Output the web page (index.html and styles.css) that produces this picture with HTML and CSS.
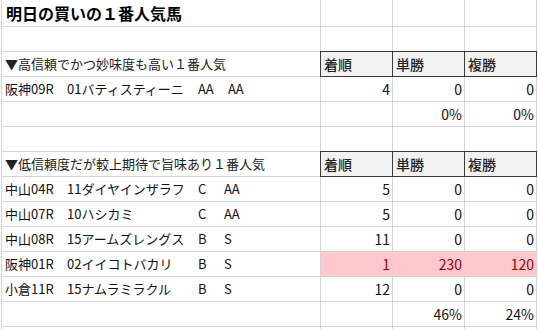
FILE: index.html
```html
<!DOCTYPE html>
<html lang="ja">
<head>
<meta charset="utf-8">
<title>明日の買いの１番人気馬</title>
<link rel="stylesheet" href="styles.css">
</head>
<body>
<div class="sheet">
  <div class="cell title">明日の買いの１番人気馬</div><div class="cell"></div><div class="cell"></div><div class="cell"></div>
  <div class="cell"></div><div class="cell"></div><div class="cell"></div><div class="cell"></div>

  <div class="cell section">▼高信頼でかつ妙味度も高い１番人気</div><div class="cell head">着順</div><div class="cell head">単勝</div><div class="cell head">複勝</div>
  <div class="cell"><div class="entry wide"><span>阪神09R</span><span>01バティスティーニ</span><span>AA</span><span>AA</span></div></div><div class="cell num">4</div><div class="cell num">0</div><div class="cell num">0</div>
  <div class="cell"></div><div class="cell num"></div><div class="cell num">0%</div><div class="cell num">0%</div>
  <div class="cell"></div><div class="cell"></div><div class="cell"></div><div class="cell"></div>

  <div class="cell section">▼低信頼度だが較上期待で旨味あり１番人気</div><div class="cell head">着順</div><div class="cell head">単勝</div><div class="cell head">複勝</div>
  <div class="cell"><div class="entry"><span>中山04R</span><span>11ダイヤインザラフ</span><span>C</span><span>AA</span></div></div><div class="cell num">5</div><div class="cell num">0</div><div class="cell num">0</div>
  <div class="cell"><div class="entry"><span>中山07R</span><span>10ハシカミ</span><span>C</span><span>AA</span></div></div><div class="cell num">5</div><div class="cell num">0</div><div class="cell num">0</div>
  <div class="cell"><div class="entry"><span>中山08R</span><span>15アームズレングス</span><span>B</span><span>S</span></div></div><div class="cell num">11</div><div class="cell num">0</div><div class="cell num">0</div>
  <div class="cell"><div class="entry"><span>阪神01R</span><span>02イイコトバカリ</span><span>B</span><span>S</span></div></div><div class="cell num hit">1</div><div class="cell num hit mid">230</div><div class="cell num hit last">120</div>
  <div class="cell"><div class="entry"><span>小倉11R</span><span>15ナムラミラクル</span><span>B</span><span>S</span></div></div><div class="cell num">12</div><div class="cell num">0</div><div class="cell num">0</div>
  <div class="cell"></div><div class="cell num"></div><div class="cell num">46%</div><div class="cell num">24%</div>
  <div class="cell"></div><div class="cell"></div><div class="cell"></div><div class="cell"></div>
</div>
</body>
</html>
```
FILE: styles.css
```css
html, body {
  margin: 0;
  padding: 0;
  background: #fff;
  overflow: hidden;
}
body {
  font-family: "Noto Sans CJK JP", "Noto Sans", sans-serif;
  color: #111;
}
.sheet {
  margin-left: 1px;
  width: 536px;
  height: 329px;
  overflow: hidden;
  box-sizing: border-box;
  display: grid;
  grid-template-columns: 318px 71px 71px 71px;
  grid-template-rows: 26px repeat(12, 24px) 2px;
  gap: 1px;
  padding: 0 1px;
  background: #d4d4d4;
}
.cell {
  background: #fff;
  display: flex;
  align-items: center;
  font-size: 13px;
  line-height: 24px;
  padding: 0 3px;
  white-space: nowrap;
  overflow: hidden;
}
.title {
  font-size: 16px;
  font-weight: 700;
  color: #000;
  padding-left: 4px;
}
.section {
  font-size: 13px;
  color: #222;
}
.head {
  background: #f2f2f2;
  box-shadow: 0 0 0 1px #3c3c3c;
  font-size: 14px;
  font-weight: 500;
  color: #222;
  padding-left: 3px;
}
.num {
  justify-content: flex-end;
  font-size: 14px;
  padding-right: 2px;
}
.hit {
  background: #ffc7ce;
  color: #9c0006;
}
.hit.mid {
  box-shadow: -1px 0 0 #ffc7ce;
}
.hit.last {
  box-shadow: -1px 0 0 #ffc7ce, 1px 0 0 #ffc7ce;
}
.entry {
  display: grid;
  grid-template-columns: 62px 131px 26px auto;
  color: #111;
}
.entry.wide {
  grid-template-columns: 62px 131px 30px auto;
}
```
